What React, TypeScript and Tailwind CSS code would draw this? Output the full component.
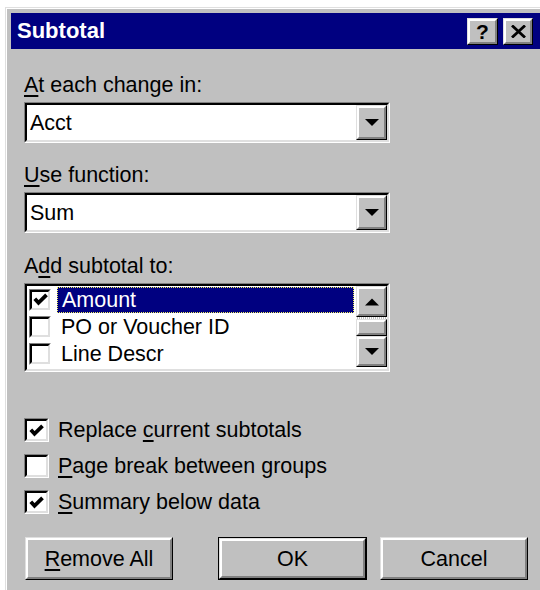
import React from "react";

type Kids = { children?: React.ReactNode; className?: string };

// Win9x raised bevel (buttons)
function Raised({ children, className = "" }: Kids) {
  return (
    <div className={`border border-t-[#dfdfdf] border-l-[#dfdfdf] border-b-black border-r-black bg-[#c0c0c0] ${className}`}>
      <div className="w-full h-full border-2 border-t-white border-l-white border-b-[#808080] border-r-[#808080] flex items-center justify-center">
        {children}
      </div>
    </div>
  );
}

// Win9x sunken bevel (fields, list, check boxes)
function Sunken({ children, className = "" }: Kids) {
  return (
    <div className={`border border-t-[#808080] border-l-[#808080] border-b-white border-r-white ${className}`}>
      <div className="w-full h-full border-2 border-t-black border-l-black border-b-[#dfdfdf] border-r-[#dfdfdf] bg-white flex">
        {children}
      </div>
    </div>
  );
}

function Check({ on, size }: { on: boolean; size: string }) {
  return (
    <Sunken className={`${size} shrink-0`}>
      <div className="flex-1 flex items-center justify-center">
        {on && (
          <svg width="15" height="13" viewBox="0 0 15 13">
            <polyline points="1.8,5.8 5.5,9.8 13.5,1.8" fill="none" stroke="black" strokeWidth="3.8" />
          </svg>
        )}
      </div>
    </Sunken>
  );
}

function ArrowDown() {
  return (
    <svg width="14" height="8" viewBox="0 0 14 8">
      <polygon points="0,0 14,0 7,7" fill="black" />
    </svg>
  );
}

function ArrowUp() {
  return (
    <svg width="14" height="8" viewBox="0 0 14 8">
      <polygon points="0,7.5 14,7.5 7,0.5" fill="black" />
    </svg>
  );
}

function Combo({ value }: { value: string }) {
  return (
    <Sunken className="w-[366px] h-[41px]">
      <div className="flex-1 flex items-center pl-[3px] text-black">{value}</div>
      <Raised className="w-[31px] h-full">
        <ArrowDown />
      </Raised>
    </Sunken>
  );
}

function U({ children }: Kids) {
  return <span className="underline underline-offset-[3px] decoration-[1.5px]">{children}</span>;
}

export default function App() {
  return (
    <div className="w-[540px] h-[590px] overflow-hidden bg-white font-['Liberation_Sans',Arial,sans-serif] text-[21.5px] leading-[24px] text-black">
      <div className="ml-[5px] mt-[7px] w-[560px] h-[600px] border-l border-t border-[#dfdfdf]">
        <div className="h-full border-l border-t border-white bg-[#c0c0c0] p-[4px]">
          {/* caption */}
          <div className="h-[36px] bg-[#000080] flex items-center justify-between pl-[6px] pr-[28px]">
            <span className="text-white font-bold text-[22px]">Subtotal</span>
            <div className="flex gap-[5px]">
              <Raised className="w-[31px] h-[27px]">
                <span className="font-bold text-[21px] leading-none">?</span>
              </Raised>
              <Raised className="w-[30px] h-[27px]">
                <svg width="15" height="13" viewBox="0 0 15 13">
                  <path d="M1 0.5 L14 12.5 M14 0.5 L1 12.5" stroke="black" strokeWidth="2.8" />
                </svg>
              </Raised>
            </div>
          </div>

          {/* body */}
          <div className="px-[13px] flex flex-col">
            <div className="mt-[24px]"><U>A</U>t each change in:</div>
            <div className="mt-[5px]"><Combo value="Acct" /></div>

            <div className="mt-[20px]"><U>U</U>se function:</div>
            <div className="mt-[5px]"><Combo value="Sum" /></div>

            <div className="mt-[21px]">A<U>d</U>d subtotal to:</div>
            <Sunken className="mt-[5px] w-[366px] h-[89px]">
              <div className="flex-1 flex flex-col">
                {[
                  { label: "Amount", on: true, sel: true },
                  { label: "PO or Voucher ID", on: false, sel: false },
                  { label: "Line Descr", on: false, sel: false },
                ].map((r) => (
                  <div key={r.label} className="h-[27px] flex items-center pl-[2px]">
                    <Check on={r.on} size="w-[22px] h-[22px]" />
                    {r.sel ? (
                      <div className="ml-[6px] mr-[2px] flex-1 h-[26px] bg-[#000080] text-white border border-dotted border-[#f0f060] flex items-center pl-[4px]">
                        {r.label}
                      </div>
                    ) : (
                      <div className="ml-[6px] pl-[4px] flex-1">{r.label}</div>
                    )}
                  </div>
                ))}
              </div>
              <div className="w-[31px] flex flex-col">
                <Raised className="w-[31px] h-[31px]">
                  <ArrowUp />
                </Raised>
                <div className="h-[2px] bg-[repeating-linear-gradient(90deg,#ffffff_0_1px,#c0c0c0_1px_2px)]" />
                <Raised className="w-[31px] h-[17px]" />
                <Raised className="w-[31px] h-[31px]">
                  <ArrowDown />
                </Raised>
              </div>
            </Sunken>

            <div className="mt-[40px] flex flex-col">
              {[
                { on: true, body: <>Replace <U>c</U>urrent subtotals</> },
                { on: false, body: <><U>P</U>age break between groups</> },
                { on: true, body: <><U>S</U>ummary below data</> },
              ].map((r, i) => (
                <div key={i} className="h-[36px] flex items-center">
                  <Check on={r.on} size="w-[25px] h-[24px]" />
                  <span className="ml-[9px]">{r.body}</span>
                </div>
              ))}
            </div>

            <div className="mt-[17px] flex">
              <Raised className="ml-[1px] w-[148px] h-[43px]">
                <span><U>R</U>emove All</span>
              </Raised>
              <div className="ml-[45px] border border-black">
                <Raised className="w-[147px] h-[41px]">
                  <span>OK</span>
                </Raised>
              </div>
              <Raised className="ml-[13px] w-[148px] h-[43px]">
                <span>Cancel</span>
              </Raised>
            </div>
          </div>
        </div>
      </div>
    </div>
  );
}
